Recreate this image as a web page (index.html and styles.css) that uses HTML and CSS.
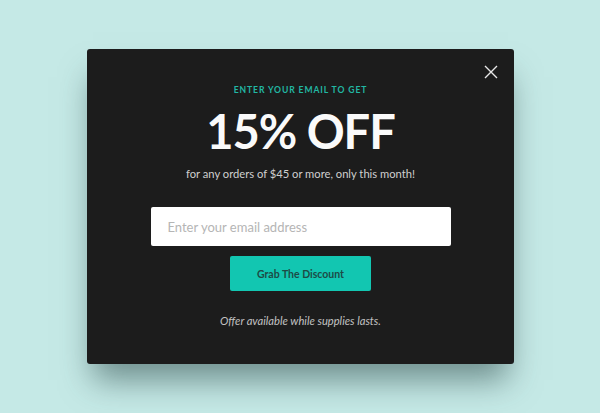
FILE: index.html
```html
<!DOCTYPE html>
<html>
<head>
<meta charset="utf-8">
<link rel="stylesheet" href="styles.css">
</head>
<body>
<div class="stage">
  <div class="modal">
    <button class="close" aria-label="Close">
      <svg width="14" height="14" viewBox="0 0 14 14"><path d="M1 1L13 13M13 1L1 13" stroke="#e8e8e8" stroke-width="1.4" fill="none"/></svg>
    </button>
    <div class="eyebrow">ENTER YOUR EMAIL TO GET</div>
    <h1 class="title">15% OFF</h1>
    <p class="sub">for any orders of $45 or more, only this month!</p>
    <div class="email">Enter your email address</div>
    <button class="cta">Grab The Discount</button>
    <p class="note">Offer available while supplies lasts.</p>
  </div>
</div>
</body>
</html>
```
FILE: styles.css
```css
html, body { margin: 0; padding: 0; }
body {
  width: 600px;
  height: 413px;
  background: #c5e9e6;
  font-family: "Lato", "Open Sans", sans-serif;
  overflow: hidden;
}
.stage {
  padding-top: 49px;
  padding-left: 87px;
}
.modal {
  position: relative;
  width: 427px;
  height: 315px;
  box-sizing: border-box;
  background: #1c1c1c;
  border-radius: 3px;
  box-shadow: 0 22px 30px -6px rgba(40, 70, 70, 0.55);
  display: flex;
  flex-direction: column;
  align-items: center;
  padding-top: 35px;
}
.close {
  position: absolute;
  top: 16px;
  right: 16px;
  width: 14px;
  height: 14px;
  padding: 0;
  border: 0;
  background: none;
  display: flex;
}
.eyebrow {
  color: #22b7a3;
  font-size: 8.6px;
  font-weight: 700;
  letter-spacing: 0.9px;
  line-height: 12px;
}
.title {
  margin: 10px 0 0;
  color: #fafafa;
  font-family: "Lato", sans-serif;
  font-size: 47px;
  font-weight: 700;
  line-height: 50px;
  letter-spacing: -1px;
}
.sub {
  margin: 11px 0 0;
  color: #cfcfcf;
  font-size: 11.2px;
  line-height: 14px;
}
.email {
  margin-top: 26px;
  width: 300px;
  height: 39px;
  box-sizing: border-box;
  background: #fff;
  border-radius: 2px;
  padding-left: 17px;
  display: flex;
  align-items: center;
  color: #b5b5b5;
  font-size: 13px;
}
.cta {
  margin-top: 10px;
  width: 141px;
  height: 35px;
  border: 0;
  border-radius: 2px;
  background: #12c6b1;
  color: #1d4b46;
  font-family: "Lato", sans-serif;
  font-size: 10.5px;
  font-weight: 700;
  padding: 0;
}
.note {
  margin: 23px 0 0;
  color: #c2c2c2;
  font-size: 11.2px;
  font-style: italic;
  line-height: 14px;
}
```
